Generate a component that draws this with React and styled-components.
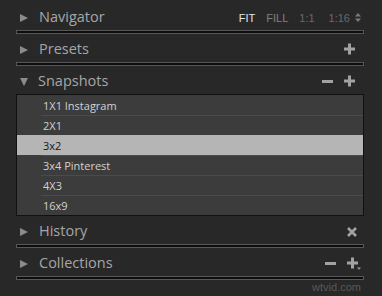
import React from 'react'
import styled, { createGlobalStyle } from 'styled-components'

const Global = createGlobalStyle`
  html, body {
    margin: 0;
    background: #282828;
  }
  body {
    font-family: "Open Sans", "Liberation Sans", sans-serif;
  }
`

const Panel = styled.div`
  width: 348px;
  margin-left: 16px;
  padding-top: 2px;
`

const Header = styled.div`
  height: 28px;
  box-sizing: border-box;
  padding-top: 3px;
  display: flex;
  align-items: center;
  padding-left: 4px;
  padding-right: ${(p) => p.$pr || 6}px;
`

const Arrow = styled.span`
  width: 0;
  height: 0;
  border-style: solid;
  ${(p) =>
    p.$open
      ? `border-width: 8px 4.5px 0 4.5px;
         border-color: #8c8c8c transparent transparent transparent;
         margin: 1px 10px 0 0;`
      : `border-width: 4.5px 0 4.5px 8px;
         border-color: transparent transparent transparent #8c8c8c;
         margin: 0 11px 0 0;`}
`

const Title = styled.span`
  flex: 1;
  font-size: 14.5px;
  color: #a6a6a6;
  line-height: 1;
  padding-bottom: 1px;
`

const Tools = styled.div`
  display: flex;
  align-items: center;
  gap: 10px;
`

const Zoom = styled.span`
  font-family: "Liberation Sans", Arial, sans-serif;
  font-size: 11px;
  color: ${(p) => p.$color};
  margin-left: ${(p) => p.$ml || 0}px;
`

const Spinner = styled.svg`
  margin-left: 5px;
`

const Bar = styled.div`
  height: 2px;
  border: 1px solid #575757;
  background: #0d0d0d;
`

const List = styled.div`
  border: 1px solid #111;
  background: #3c3c3c;
`

const Row = styled.div`
  height: 20px;
  display: flex;
  padding-left: 24px;
  background: ${(p) => (p.$selected ? '#b5b5b5' : 'transparent')};
`

const Label = styled.div`
  flex: 1;
  border-top: 1px solid ${(p) => (p.$first || p.$selected ? 'transparent' : '#4b4b4b')};
  padding-left: 2px;
  font-size: 11px;
  line-height: 19px;
  color: ${(p) => (p.$selected ? '#161616' : '#d2d2d2')};
`

const Mark = styled.div`
  font-family: "Liberation Sans", Arial, sans-serif;
  font-size: 11px;
  color: #585858;
  text-align: right;
  padding-right: 3px;
  margin-top: 1px;
`

const ICON = '#a2a2a2'

const Plus = ({ caret }) => (
  <svg width="14" height="13" viewBox="0 0 14 13">
    <rect x="0" y="4.5" width="11" height="3" fill={ICON} />
    <rect x="4" y="0.5" width="3" height="11" fill={ICON} />
    {caret && <path d="M10 10.5 L14 10.5 L12 12.8 Z" fill={ICON} />}
  </svg>
)

const Minus = () => (
  <svg width="12" height="13" viewBox="0 0 12 13">
    <rect x="0" y="5" width="11" height="3" fill={ICON} />
  </svg>
)

const Close = () => (
  <svg width="10" height="10" viewBox="0 0 10 10">
    <path d="M1 1 L9 9 M9 1 L1 9" stroke={ICON} strokeWidth="2.6" />
  </svg>
)

const snapshots = ['1X1 Instagram', '2X1', '3x2', '3x4 Pinterest', '4X3', '16x9']

const App = () => {
  return (
    <>
      <Global />
      <Panel>
        <Header $pr={3}>
          <Arrow />
          <Title>Navigator</Title>
          <Zoom $color="#e4e4e4">FIT</Zoom>
          <Zoom $color="#808080" $ml={11}>FILL</Zoom>
          <Zoom $color="#686868" $ml={11}>1:1</Zoom>
          <Zoom $color="#686868" $ml={14}>1:16</Zoom>
          <Spinner width="6" height="9" viewBox="0 0 6 9">
            <path d="M0 3.5 L3 0 L6 3.5 Z M0 5.5 L6 5.5 L3 9 Z" fill="#7c7c7c" />
          </Spinner>
        </Header>
        <Bar />
        <Header>
          <Arrow />
          <Title>Presets</Title>
          <Tools>
            <Plus />
          </Tools>
        </Header>
        <Bar />
        <Header>
          <Arrow $open />
          <Title>Snapshots</Title>
          <Tools>
            <Minus />
            <Plus />
          </Tools>
        </Header>
        <List>
          {snapshots.map((name, key) => (
            <Row key={key} $selected={name === '3x2'}>
              <Label $first={key === 0} $selected={name === '3x2'}>{name}</Label>
            </Row>
          ))}
        </List>
        <Header $pr={7}>
          <Arrow />
          <Title>History</Title>
          <Close />
        </Header>
        <Bar />
        <Header $pr={3}>
          <Arrow />
          <Title>Collections</Title>
          <Tools>
            <Minus />
            <Plus caret />
          </Tools>
        </Header>
        <Bar />
        <Mark>wtvid.com</Mark>
      </Panel>
    </>
  )
}

export default App
